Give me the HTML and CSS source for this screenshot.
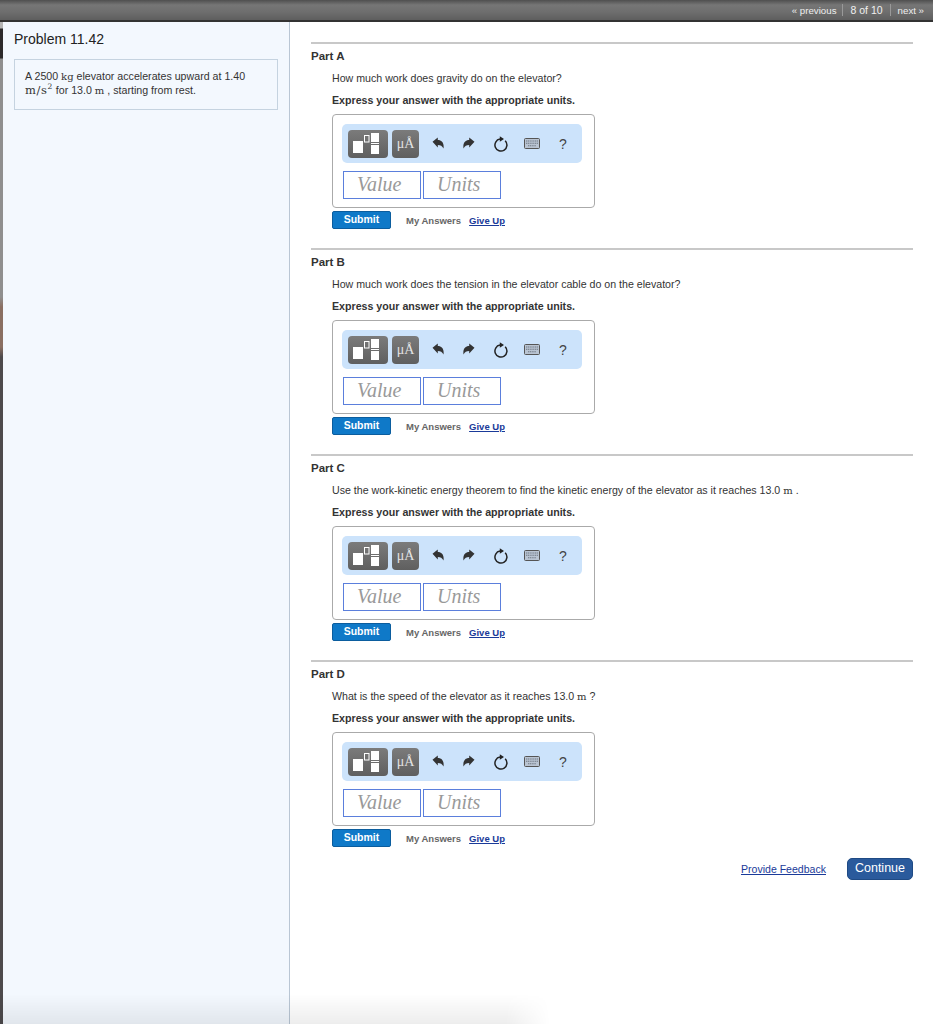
FILE: index.html
```html
<!DOCTYPE html>
<html lang="en">
<head>
<meta charset="utf-8">
<title>Problem 11.42</title>
<link rel="stylesheet" href="styles.css">
</head>
<body>
<svg class="sprite" aria-hidden="true">
  <symbol id="i-templates" viewBox="0 0 40 28"><rect x="5" y="11" width="10" height="12" fill="#fff"/><rect x="16.500" y="5.500" width="4.500" height="6.500" fill="none" stroke="#fff"/><rect x="23" y="3" width="8" height="9" fill="#fff"/><rect x="23" y="13" width="8" height="1" fill="#fff"/><rect x="23" y="15" width="8" height="9" fill="#fff"/></symbol>
  <symbol id="i-undo" viewBox="0 0 12 12"><path d="M.5 4.700 5.800 .5V3c4 0 6.500 3 5.700 8.500-1.200-2.500-3-3.600-5.700-3.600v2.600z" fill="#333"/></symbol>
  <symbol id="i-redo" viewBox="0 0 12 12"><path d="M11.500 4.700 6.200 .5V3c-4 0-6.500 3-5.700 8.500 1.200-2.500 3-3.600 5.700-3.600v2.600z" fill="#333"/></symbol>
  <symbol id="i-reset" viewBox="0 0 16 17"><path d="M7 4.100a6 6 0 1 0 5.200 1.700" fill="none" stroke="#222" stroke-width="1.500"/><path d="M6.800 1.200 11 3.900 6.800 6.800z" fill="#222"/></symbol>
  <symbol id="i-keys" viewBox="0 0 16 11"><rect x=".5" y=".5" width="15" height="10" rx="1" fill="#b9c4d2" stroke="#555"/><path d="M2 3h12M2 5.200h12M4 7.800h8" stroke="#6f7884" stroke-width="1.100" stroke-dasharray="1.200 .6"/></symbol>
</svg>
<header class="topbar">
  <nav class="pager">
    <a class="pager-link">« previous</a>
    <span class="pager-count">8 of 10</span>
    <a class="pager-link pager-next">next »</a>
  </nav>
</header>
<div class="main">
  <div class="edge"></div>
  <aside class="sidebar">
    <h1 class="title">Problem 11.42</h1>
    <div class="statement">A 2500 <span class="math">kg</span> elevator accelerates upward at 1.40<br><span class="math math-wide">m/s<sup>2</sup></span> for 13.0 <span class="math">m</span> , starting from rest.</div>
  </aside>
  <main class="content">
    <section class="part">
      <h2 class="part-title">Part A</h2>
      <p class="question">How much work does gravity do on the elevator?</p>
      <p class="instruction">Express your answer with the appropriate units.</p>
      <div class="answer-box">
        <div class="toolbar">
          <span class="tool-btn tool-templates"><svg class="ico-templates"><use href="#i-templates"/></svg></span>
          <span class="tool-btn tool-units">μÅ</span>
          <span class="tool-icon tool-first"><svg class="ico-arrow"><use href="#i-undo"/></svg></span>
          <span class="tool-icon"><svg class="ico-arrow"><use href="#i-redo"/></svg></span>
          <span class="tool-icon"><svg class="ico-reset"><use href="#i-reset"/></svg></span>
          <span class="tool-icon"><svg class="ico-keys"><use href="#i-keys"/></svg></span>
          <span class="tool-help">?</span>
        </div>
        <div class="inputs"><span class="field">Value</span><span class="field">Units</span></div>
      </div>
      <div class="actions"><span class="submit">Submit</span><span class="my-answers">My Answers</span><a class="give-up">Give Up</a></div>
    </section>
    <section class="part">
      <h2 class="part-title">Part B</h2>
      <p class="question">How much work does the tension in the elevator cable do on the elevator?</p>
      <p class="instruction">Express your answer with the appropriate units.</p>
      <div class="answer-box">
        <div class="toolbar">
          <span class="tool-btn tool-templates"><svg class="ico-templates"><use href="#i-templates"/></svg></span>
          <span class="tool-btn tool-units">μÅ</span>
          <span class="tool-icon tool-first"><svg class="ico-arrow"><use href="#i-undo"/></svg></span>
          <span class="tool-icon"><svg class="ico-arrow"><use href="#i-redo"/></svg></span>
          <span class="tool-icon"><svg class="ico-reset"><use href="#i-reset"/></svg></span>
          <span class="tool-icon"><svg class="ico-keys"><use href="#i-keys"/></svg></span>
          <span class="tool-help">?</span>
        </div>
        <div class="inputs"><span class="field">Value</span><span class="field">Units</span></div>
      </div>
      <div class="actions"><span class="submit">Submit</span><span class="my-answers">My Answers</span><a class="give-up">Give Up</a></div>
    </section>
    <section class="part">
      <h2 class="part-title">Part C</h2>
      <p class="question">Use the work-kinetic energy theorem to find the kinetic energy of the elevator as it reaches 13.0 <span class="math">m</span> .</p>
      <p class="instruction">Express your answer with the appropriate units.</p>
      <div class="answer-box">
        <div class="toolbar">
          <span class="tool-btn tool-templates"><svg class="ico-templates"><use href="#i-templates"/></svg></span>
          <span class="tool-btn tool-units">μÅ</span>
          <span class="tool-icon tool-first"><svg class="ico-arrow"><use href="#i-undo"/></svg></span>
          <span class="tool-icon"><svg class="ico-arrow"><use href="#i-redo"/></svg></span>
          <span class="tool-icon"><svg class="ico-reset"><use href="#i-reset"/></svg></span>
          <span class="tool-icon"><svg class="ico-keys"><use href="#i-keys"/></svg></span>
          <span class="tool-help">?</span>
        </div>
        <div class="inputs"><span class="field">Value</span><span class="field">Units</span></div>
      </div>
      <div class="actions"><span class="submit">Submit</span><span class="my-answers">My Answers</span><a class="give-up">Give Up</a></div>
    </section>
    <section class="part">
      <h2 class="part-title">Part D</h2>
      <p class="question">What is the speed of the elevator as it reaches 13.0 <span class="math">m</span> ?</p>
      <p class="instruction">Express your answer with the appropriate units.</p>
      <div class="answer-box">
        <div class="toolbar">
          <span class="tool-btn tool-templates"><svg class="ico-templates"><use href="#i-templates"/></svg></span>
          <span class="tool-btn tool-units">μÅ</span>
          <span class="tool-icon tool-first"><svg class="ico-arrow"><use href="#i-undo"/></svg></span>
          <span class="tool-icon"><svg class="ico-arrow"><use href="#i-redo"/></svg></span>
          <span class="tool-icon"><svg class="ico-reset"><use href="#i-reset"/></svg></span>
          <span class="tool-icon"><svg class="ico-keys"><use href="#i-keys"/></svg></span>
          <span class="tool-help">?</span>
        </div>
        <div class="inputs"><span class="field">Value</span><span class="field">Units</span></div>
      </div>
      <div class="actions"><span class="submit">Submit</span><span class="my-answers">My Answers</span><a class="give-up">Give Up</a></div>
    </section>
    <div class="footer-row"><a class="feedback">Provide Feedback</a><span class="continue">Continue</span></div>
  </main>
</div>
<div class="bottom-shade"></div>
</body>
</html>
```
FILE: styles.css
```css
* { box-sizing: border-box; }
html, body { margin: 0; height: 1024px; overflow: hidden; background: #fff; }
body { font-family: "Liberation Sans", Arial, sans-serif; color: #333; position: relative; }
.sprite { display: none; }
.topbar { height: 22px; background: linear-gradient(#4f4f4f, #767676 25%, #6e6e6e 60%, #5e5e5e); border-bottom: 2px solid #333; display: flex; justify-content: flex-end; align-items: center; padding-right: 9px; }
.pager { display: flex; align-items: center; font-size: 9.700px; color: #f0f0f0; }
.pager-link { color: #eee; }
.pager-count { border-left: 1px solid #999; border-right: 1px solid #999; padding: 0 7px 0 7px; margin: 0 7px 0 6px; font-size: 10.500px; line-height: 12px; }
.main { display: flex; height: 1002px; }
.edge { width: 3px; flex: none; background: linear-gradient(#b5b5b5 0, #b5b5b5 6px, #2c2a2b 7px, #2c2a2b 36px, #8f8f8f 37px, #8f8f8f 275px, #8a6f62 285px, #8a6f62 325px, #4d4a4c 335px, #4d4a4c 100%); }
.sidebar { width: 287px; background: #f3f8fe; border-right: 1px solid #b9c6d4; padding: 9px 11px 0 11px; flex: none; }
.title { font-size: 14px; font-weight: 400; color: #222; margin: 0 0 12px; line-height: 16px; }
.statement { border: 1px solid #c5d3e0; font-size: 10.650px; line-height: 14px; padding: 9px 10px 11px; color: #333; height: 51px; }
.math { font-family: "DejaVu Serif", "Liberation Serif", serif; font-size: 10px; line-height: 0; }
.math-wide { font-size: 11.500px; letter-spacing: .6px; }
sup { font-size: 7.500px; line-height: 0; }
.content { flex: 1; padding: 20px 20px 0 21px; }
.part { border-top: 2px solid #c8c8c8; height: 206px; padding-top: 5px; }
.part-title { margin: 0; font-size: 11.500px; font-weight: 700; color: #333; line-height: 14px; }
.question { margin: 8px 0 0 21px; font-size: 10.640px; line-height: 14px; color: #333; }
.instruction { margin: 8px 0 0 21px; font-size: 10.650px; font-weight: 700; line-height: 14px; color: #333; }
.answer-box { margin: 7px 0 0 21px; width: 263px; height: 94px; border: 1px solid #aaa; border-radius: 4px; padding: 9px 0 0 9px; }
.toolbar { width: 240px; height: 39px; background: #cce3fb; border-radius: 5px; display: flex; align-items: center; padding-left: 6px; }
.tool-btn { height: 28px; border-radius: 4px; background: linear-gradient(#7b7b7b, #5f5f5f); display: flex; align-items: center; justify-content: center; color: #e4e4e4; }
.tool-templates { width: 40px; }
.ico-templates { width: 40px; height: 28px; }
.tool-units { width: 27px; margin-left: 4px; font-family: "Liberation Serif", serif; font-size: 14px; }
.tool-icon { display: flex; justify-content: center; align-items: center; width: 31.500px; }
.tool-first { margin-left: 3px; }
.ico-arrow { width: 12px; height: 12px; margin-bottom: 2px; }
.ico-reset { width: 16px; height: 17px; }
.ico-keys { width: 16px; height: 11px; }
.tool-help { margin-left: 4px; width: 22px; text-align: center; font-size: 14px; color: #444; }
.inputs { display: flex; gap: 2px; margin: 8px 0 0 1px; }
.field { width: 78px; height: 28px; border: 1px solid #5b7fdc; font-family: "Liberation Serif", serif; font-style: italic; font-size: 20px; line-height: 25px; color: #999; padding-left: 13px; }
.actions { display: flex; align-items: center; margin: 4px 0 0 21px; font-size: 9.500px; font-weight: 700; height: 16px; }
.submit { width: 59px; height: 18px; background: #0f79c8; border: 1px solid #0b5d9e; border-radius: 2px; color: #fff; font-size: 10.500px; text-align: center; line-height: 15px; }
.my-answers { margin-left: 15px; color: #666; }
.give-up { margin-left: 8px; color: #1a3a99; text-decoration: underline; }
.footer-row { display: flex; justify-content: flex-end; align-items: center; gap: 21px; margin-top: -8px; }
.feedback { font-size: 10.550px; color: #1a3a99; text-decoration: underline; }
.continue { width: 66px; height: 22px; background: #2a5a9c; border: 1px solid #1f4a84; border-radius: 5px; color: #fff; font-size: 12.500px; text-align: center; line-height: 19px; }
.bottom-shade { position: absolute; left: 0; bottom: 0; width: 550px; height: 30px; background: linear-gradient(transparent, rgba(0, 0, 0, .07)); -webkit-mask-image: linear-gradient(to right, #000 92%, transparent); mask-image: linear-gradient(to right, #000 92%, transparent); }
```
